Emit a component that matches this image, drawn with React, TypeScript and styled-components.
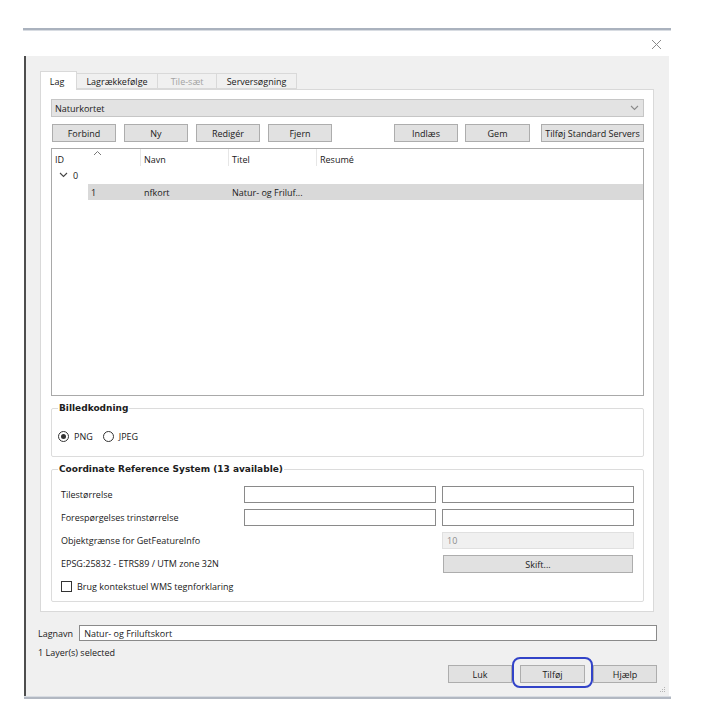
import React from 'react';
import styled, { createGlobalStyle } from 'styled-components';

const GlobalStyle = createGlobalStyle`
  html, body {
    margin: 0;
    padding: 0;
    background: #ffffff;
  }
  body {
    font-family: "Open Sans", "Noto Sans", sans-serif;
    font-size: 9px;
    color: #202020;
  }
  * {
    box-sizing: border-box;
  }
`;

const Screen = styled.div`
  width: 703px;
  height: 706px;
  padding: 28px 0 0 23px;
`;

const Window = styled.div`
  width: 648px;
  display: flex;
  flex-direction: column;
`;

const TopEdge = styled.div`
  height: 3px;
  background: #aab2be;
  border-bottom: 1px solid #d8dce2;
`;

const TitleBar = styled.div`
  height: 25px;
  background: #ffffff;
  display: flex;
  align-items: center;
  justify-content: flex-end;
  padding: 2px 9px 0 0;
`;

const Body = styled.div`
  position: relative;
  width: 645px;
  margin-left: 1px;
  background: #f0f0f0;
  border-left: 2px solid #4e4e4e;
  padding: 15px 12px 13px 12px;
  display: flex;
  flex-direction: column;
`;

const BottomEdge = styled.div`
  height: 3px;
  margin-left: 1px;
  width: 647px;
  background: #b2b8c2;
  border-top: 1px solid #d8dce2;
`;

const TabBar = styled.div`
  display: flex;
  align-items: flex-end;
  height: 18px;
  margin-left: 2px;
`;

const Tab = styled.div<{ $active?: boolean; $disabled?: boolean; $w: number }>`
  width: ${p => p.$w}px;
  height: ${p => (p.$active ? 19 : 16)}px;
  margin-bottom: ${p => (p.$active ? -1 : 0)}px;
  padding-right: ${p => (p.$active ? 3 : 0)}px;
  display: flex;
  align-items: center;
  justify-content: center;
  white-space: nowrap;
  background: ${p => (p.$active ? '#ffffff' : '#f0f0f0')};
  border: 1px solid #d9d9d9;
  border-bottom: ${p => (p.$active ? 'none' : '1px solid #d9d9d9')};
  border-left: ${p => (p.$active ? '1px solid #d9d9d9' : 'none')};
  color: ${p => (p.$disabled ? '#a3a3a3' : '#202020')};
  position: relative;
  z-index: ${p => (p.$active ? 1 : 0)};
`;

const Pane = styled.div`
  margin: 0 3px 0 2px;
  background: #ffffff;
  border: 1px solid #d9d9d9;
  padding: 9px 9px 9px 10px;
  display: flex;
  flex-direction: column;
`;

const Combo = styled.div`
  height: 18px;
  background: #e3e3e3;
  border: 1px solid #c6c6c6;
  display: flex;
  align-items: center;
  justify-content: space-between;
  padding: 0 4px 0 3px;
`;

const ButtonRow = styled.div`
  display: flex;
  justify-content: space-between;
  margin-top: 7px;
  padding-left: 1px;
`;

const ButtonGroup = styled.div<{ $gap: number }>`
  display: flex;
  gap: ${p => p.$gap}px;
`;

const Button = styled.div<{ $w?: number; $ml?: number }>`
  width: ${p => (p.$w ? `${p.$w}px` : 'auto')};
  margin-left: ${p => p.$ml || 0}px;
  height: 18px;
  background: #e1e1e1;
  border: 1px solid #adadad;
  display: flex;
  align-items: center;
  justify-content: center;
  white-space: nowrap;
  position: relative;
`;

const Tree = styled.div`
  margin-top: 6px;
  height: 248px;
  border: 1px solid #a9a9a9;
  background: #ffffff;
  display: flex;
  flex-direction: column;
`;

const HeaderRow = styled.div`
  display: grid;
  grid-template-columns: 89px 88px 88px 1fr;
  height: 17px;
`;

const HeaderCell = styled.div<{ $last?: boolean }>`
  position: relative;
  display: flex;
  align-items: flex-end;
  padding: 0 0 0 3px;
  border-right: ${p => (p.$last ? 'none' : '1px solid #e6e6e6')};
`;

const SortMark = styled.svg`
  position: absolute;
  top: 1px;
  left: 41px;
`;

const TreeRow = styled.div<{ $indent: number; $selected?: boolean }>`
  display: grid;
  grid-template-columns: ${p => 89 - p.$indent}px 88px 88px 1fr;
  margin: 1px 0 0 ${p => p.$indent}px;
  height: 16px;
  align-items: center;
  background: ${p => (p.$selected ? '#d9d9d9' : 'transparent')};
`;

const TreeCell = styled.div`
  display: flex;
  align-items: center;
  gap: 5px;
  padding-left: 3px;
`;

const Group = styled.fieldset`
  margin: 7px 0 0 0;
  padding: 0 9px 0 6px;
  border: 1px solid #dcdcdc;
  border-radius: 2px;
  min-width: 0;
`;

const Legend = styled.legend`
  padding: 0 1px;
  font-family: "DejaVu Sans", Verdana, sans-serif;
  font-weight: bold;
  font-size: 9px;
  line-height: 11px;
  color: #202020;
`;

const RadioRow = styled.div`
  display: flex;
  align-items: center;
  gap: 5px;
  margin: 16px 0 14px 0;
  height: 12px;
`;

const Radio = styled.div<{ $checked?: boolean }>`
  width: 11px;
  height: 11px;
  border-radius: 50%;
  border: 1px solid #333333;
  background: #ffffff;
  display: flex;
  align-items: center;
  justify-content: center;
  &::after {
    content: '';
    width: 5px;
    height: 5px;
    border-radius: 50%;
    background: ${p => (p.$checked ? '#333333' : 'transparent')};
  }
`;

const RadioLabel = styled.span`
  margin-right: 5px;
`;

const CrsGrid = styled.div`
  display: grid;
  grid-template-columns: 177px 192px 192px;
  column-gap: 6px;
  row-gap: 6px;
  margin: 11px 0 8px 3px;
`;

const Label = styled.div`
  display: flex;
  align-items: center;
  height: 17px;
  white-space: nowrap;
`;

const Input = styled.div<{ $disabled?: boolean }>`
  height: 17px;
  border: 1px solid ${p => (p.$disabled ? '#e0e0e0' : '#8a8a8a')};
  background: ${p => (p.$disabled ? '#f0f0f0' : '#ffffff')};
  color: ${p => (p.$disabled ? '#8c8c8c' : '#202020')};
  display: flex;
  align-items: center;
  padding-left: 4px;
`;

const WideButton = styled(Button)`
  grid-column: 3;
  width: 190px;
  margin-left: 1px;
`;

const CheckRow = styled.div`
  grid-column: 1 / -1;
  display: flex;
  align-items: center;
  gap: 5px;
  height: 14px;
`;

const CheckBox = styled.div`
  width: 11px;
  height: 11px;
  border: 1px solid #333333;
  background: #ffffff;
`;

const NameRow = styled.div`
  display: flex;
  align-items: center;
  gap: 6px;
  margin-top: 13px;
`;

const NameInput = styled.div`
  flex: 1;
  height: 16px;
  border: 1px solid #8a8a8a;
  background: #ffffff;
  display: flex;
  align-items: center;
  padding-left: 4px;
`;

const Status = styled.div`
  margin-top: 5px;
  height: 12px;
  display: flex;
  align-items: center;
`;

const Footer = styled.div`
  display: flex;
  justify-content: flex-end;
  gap: 8px;
  margin-top: 7px;
`;

const Highlight = styled.div`
  position: absolute;
  left: -9px;
  right: -9px;
  top: -9px;
  bottom: -6px;
  border: 2px solid #3243c8;
  border-radius: 8px;
`;

const Grip = styled.svg`
  position: absolute;
  right: 3px;
  bottom: 3px;
`;

const Chevron = ({ color = '#555' }: { color?: string }) => (
  <svg width="9" height="6" viewBox="0 0 9 6">
    <path d="M1 1 L4.5 4.5 L8 1" fill="none" stroke={color} strokeWidth="1.1" />
  </svg>
);

const App = () => {
  return (
    <Screen>
      <GlobalStyle />
      <Window>
        <TopEdge />
        <TitleBar>
          <svg width="11" height="11" viewBox="0 0 11 11">
            <path d="M1 1 L10 10 M10 1 L1 10" stroke="#8a8a8a" strokeWidth="1" />
          </svg>
        </TitleBar>
        <Body>
          <TabBar>
            <Tab $active $w={37}>Lag</Tab>
            <Tab $w={81}>Lagrækkefølge</Tab>
            <Tab $w={59} $disabled>Tile-sæt</Tab>
            <Tab $w={80}>Serversøgning</Tab>
          </TabBar>
          <Pane>
            <Combo>
              <span>Naturkortet</span>
              <Chevron color="#8a8a8a" />
            </Combo>
            <ButtonRow>
              <ButtonGroup $gap={8}>
                <Button $w={64}>Forbind</Button>
                <Button $w={64}>Ny</Button>
                <Button $w={64}>Redigér</Button>
                <Button $w={64}>Fjern</Button>
              </ButtonGroup>
              <ButtonGroup $gap={0}>
                <Button $w={64}>Indlæs</Button>
                <Button $w={65} $ml={7}>Gem</Button>
                <Button $w={103} $ml={11}>Tilføj Standard Servers</Button>
              </ButtonGroup>
            </ButtonRow>
            <Tree>
              <HeaderRow>
                <HeaderCell>
                  ID
                  <SortMark width="9" height="6" viewBox="0 0 9 6">
                    <path d="M1 5 L4.5 1.5 L8 5" fill="none" stroke="#777" strokeWidth="1" />
                  </SortMark>
                </HeaderCell>
                <HeaderCell>Navn</HeaderCell>
                <HeaderCell>Titel</HeaderCell>
                <HeaderCell $last>Resumé</HeaderCell>
              </HeaderRow>
              <TreeRow $indent={4}>
                <TreeCell>
                  <Chevron color="#444" />
                  <span>0</span>
                </TreeCell>
              </TreeRow>
              <TreeRow $indent={36} $selected>
                <TreeCell>1</TreeCell>
                <TreeCell>nfkort</TreeCell>
                <TreeCell>Natur- og Friluf...</TreeCell>
                <TreeCell />
              </TreeRow>
            </Tree>
            <Group>
              <Legend>Billedkodning</Legend>
              <RadioRow>
                <Radio $checked />
                <RadioLabel>PNG</RadioLabel>
                <Radio />
                <RadioLabel>JPEG</RadioLabel>
              </RadioRow>
            </Group>
            <Group>
              <Legend>Coordinate Reference System (13 available)</Legend>
              <CrsGrid>
                <Label>Tilestørrelse</Label>
                <Input />
                <Input />
                <Label>Forespørgelses trinstørrelse</Label>
                <Input />
                <Input />
                <Label>Objektgrænse for GetFeatureInfo</Label>
                <span />
                <Input $disabled>10</Input>
                <Label>EPSG:25832 - ETRS89 / UTM zone 32N</Label>
                <WideButton>Skift...</WideButton>
                <CheckRow>
                  <CheckBox />
                  <span>Brug kontekstuel WMS tegnforklaring</span>
                </CheckRow>
              </CrsGrid>
            </Group>
          </Pane>
          <NameRow>
            <span>Lagnavn</span>
            <NameInput>Natur- og Friluftskort</NameInput>
          </NameRow>
          <Status>1 Layer(s) selected</Status>
          <Footer>
            <Button $w={64}>Luk</Button>
            <Button $w={65}>
              Tilføj
              <Highlight />
            </Button>
            <Button $w={64}>Hjælp</Button>
          </Footer>
          <Grip width="7" height="7" viewBox="0 0 7 7">
            <rect x="5" y="1" width="1" height="1" fill="#b5b5b5" />
            <rect x="3" y="3" width="1" height="1" fill="#b5b5b5" />
            <rect x="5" y="3" width="1" height="1" fill="#b5b5b5" />
            <rect x="1" y="5" width="1" height="1" fill="#b5b5b5" />
            <rect x="3" y="5" width="1" height="1" fill="#b5b5b5" />
            <rect x="5" y="5" width="1" height="1" fill="#b5b5b5" />
          </Grip>
        </Body>
        <BottomEdge />
      </Window>
    </Screen>
  );
};

export default App;
